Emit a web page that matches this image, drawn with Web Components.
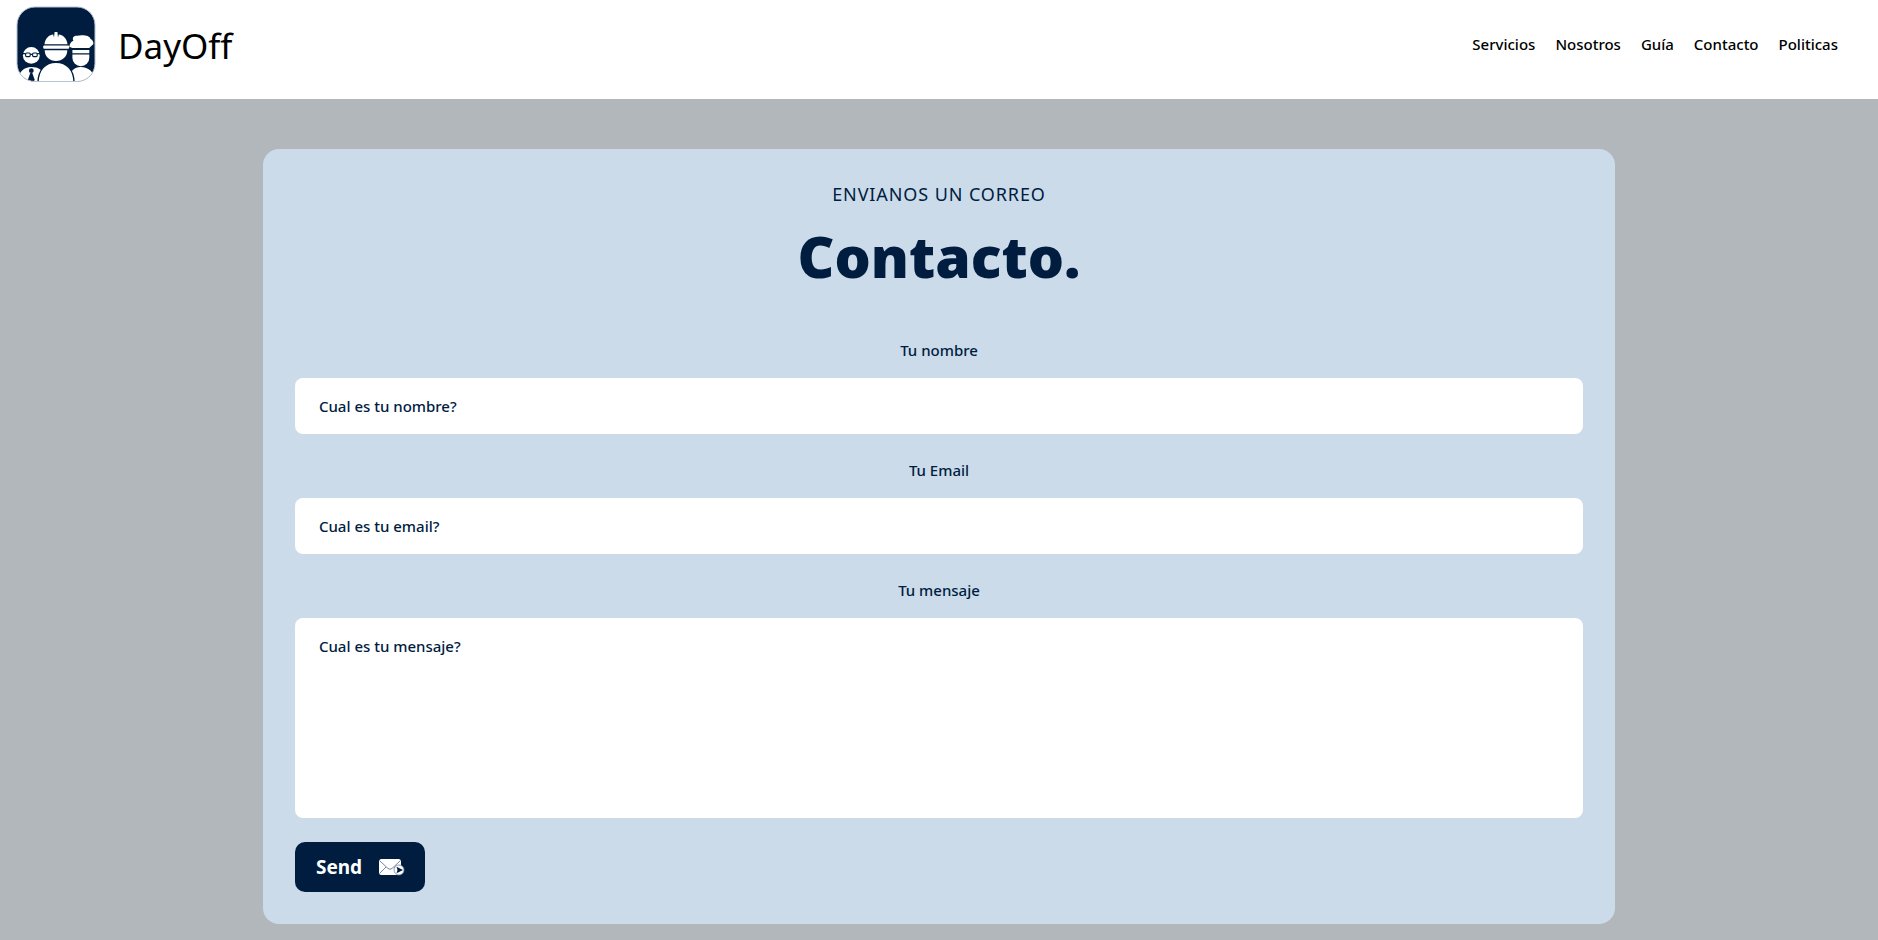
<!DOCTYPE html>
<html lang="es">
<head>
<meta charset="utf-8">
<meta name="viewport" content="width=device-width, initial-scale=1">
<title>DayOff - Contacto</title>
<style>
  html { height: 100%; }
  body {
    margin: 0;
    min-height: 100%;
    background: #b2b7bb;
    color: #001d3f;
    font: 15px/24px "Segoe UI", "Noto Sans", "Open Sans", sans-serif;
  }
</style>
</head>
<body>
<dayoff-app></dayoff-app>

<template id="tpl-app">
  <style>
    :host { display: block; }
    main { padding: 50px 0 16px; }
  </style>
  <dayoff-header>
    <nav-link href="#servicios">Servicios</nav-link>
    <nav-link href="#nosotros">Nosotros</nav-link>
    <nav-link href="#guia">Guía</nav-link>
    <nav-link href="#contacto">Contacto</nav-link>
    <nav-link href="#politicas">Politicas</nav-link>
  </dayoff-header>
  <main>
    <contact-card>
      <span slot="kicker">Envianos un correo</span>
      <span slot="title">Contacto.</span>
      <form-field label="Tu nombre" name="name" placeholder="Cual es tu nombre?"></form-field>
      <form-field label="Tu Email" name="email" type="email" placeholder="Cual es tu email?"></form-field>
      <form-field label="Tu mensaje" name="message" rows="7" placeholder="Cual es tu mensaje?"></form-field>
      <send-button>Send</send-button>
    </contact-card>
  </main>
</template>

<template id="tpl-header">
  <style>
    :host { display: block; background: #fff; color: #000; }
    header { display: flex; justify-content: space-between; align-items: flex-start; padding: 6px 40px 17px 16px; }
    .brand { display: flex; align-items: center; gap: 22px; color: inherit; text-decoration: none; font-size: 35px; line-height: 40px; }
    .brand span { padding-top: 4px; }
    nav { display: flex; gap: 20px; padding-top: 26px; }
  </style>
  <header>
    <a class="brand" href="#inicio"><dayoff-logo></dayoff-logo><span>DayOff</span></a>
    <nav><slot></slot></nav>
  </header>
</template>

<template id="tpl-link">
  <style>
    :host { display: block; }
    a { color: inherit; text-decoration: none; font-weight: 500; }
  </style>
  <a><slot></slot></a>
</template>

<template id="tpl-logo">
  <style>
    :host { display: block; }
    svg { display: block; width: 80px; height: 76px; }
  </style>
  <svg viewBox="0 0 80 76" aria-hidden="true">
    <defs><clipPath id="tile"><rect x="1" y="1" width="78" height="74.5" rx="18"/></clipPath></defs>
    <rect x="1" y="1" width="78" height="74.5" rx="18" fill="#001d3f"/>
    <g clip-path="url(#tile)" fill="#fff">
      <!-- office worker -->
      <circle cx="15.3" cy="49.4" r="8.4"/>
      <g fill="none" stroke="#001d3f" stroke-width="1.1">
        <rect x="9.6" y="47" width="4.6" height="3.6" rx="1"/>
        <rect x="16.6" y="47" width="4.6" height="3.6" rx="1"/>
        <path d="M7 47.6h2.6M14.2 48.4h2.4M21.2 47.6h2.6"/>
      </g>
      <path d="M2 76C2 66 8 61 15.3 61S27 64 27 69v7z"/>
      <circle cx="15.3" cy="64.7" r="2.4" fill="#001d3f"/>
      <path d="M14.3 67h2l2.300 6.500-.8 2.500h-5l-.8-2.500z" fill="#001d3f"/>
      <!-- cook -->
      <path d="M54 76C53 66 57 60.9 64.7 60.9S79 66 79 76z"/>
      <path d="M56.4 48.6h16.9v3.2a8.4 8.4 0 0 1-16.9 0z"/>
      <path d="M56.4 43.9h16.9v3.4H56.4z"/>
      <path d="M56.2 41.9 53.4 40.7C53.3 38 55.3 35.4 57.4 34.8 55.6 31 58.6 29.3 61.8 29.8 65 28.7 74 28.8 74.6 33.1 76.4 33.8 77.6 36 77.4 38L73.2 41.9z"/>
      <!-- builder -->
      <path d="M22 76C22.5 64 29 56.3 40 56.3S57.7 64 58 76z" stroke="#001d3f" stroke-width="1.4"/>
      <path d="M28.7 44.2h22.6c0 6.4-5 10.8-11.3 10.8S28.7 50.6 28.7 44.2z"/>
      <path d="M28.500 38.300C29 32.500 33.500 28.700 37.200 28.600L38 31.500 38.600 26h2.800L42 31.500 42.800 28.600C46.500 28.700 51 32.500 51.500 38.300z"/>
      <rect x="27.2" y="39.6" width="26" height="3.2" rx="1"/>
    </g>
    <rect x="1" y="1" width="78" height="74.5" rx="18" fill="none" stroke="#b9c3d2"/>
  </svg>
</template>

<template id="tpl-card">
  <style>
    :host { display: block; box-sizing: border-box; width: 72%; margin: 0 auto; padding: 32px; border-radius: 16px; background: #cbdbea; }
    p { margin: 0 0 16px; text-align: center; font-size: 18px; line-height: 26px; letter-spacing: 0.05em; text-transform: uppercase; }
    h1 { margin: 0; text-align: center; font-size: 57px; line-height: 67px; font-weight: 900; }
    form { display: flex; flex-direction: column; gap: 24px; margin-top: 48px; }
  </style>
  <p><slot name="kicker"></slot></p>
  <h1><slot name="title"></slot></h1>
  <form><slot></slot></form>
</template>

<template id="tpl-field">
  <style>
    :host { display: block; }
    label { display: block; margin-bottom: 16px; text-align: center; font-weight: 500; }
    input, textarea {
      display: block; box-sizing: border-box; width: 100%; margin: 0; padding: 16px 24px;
      border: 0; border-radius: 8px; outline: 0; background: #fff; color: inherit;
      font: inherit; font-weight: 500; resize: none;
    }
    input { height: 56px; }
    ::placeholder { color: #001d3f; opacity: 1; }
  </style>
  <label for="control"></label>
</template>

<template id="tpl-send">
  <style>
    :host { display: block; }
    button {
      display: flex; align-items: center; gap: 16px; height: 50px; padding: 0 19px 0 21px; border: 0;
      border-radius: 10px; background: #001d3f; color: #fff; font: inherit; font-size: 19px; font-weight: 700; cursor: pointer;
    }
    svg { display: block; width: 28px; height: 18px; }
  </style>
  <button type="submit"><slot></slot>
    <svg viewBox="0 0 28 18" aria-hidden="true">
      <rect x="1" y="1" width="22" height="16" rx="2.5" fill="#fff"/>
      <path d="M1.5 2.5 10 10.5q2 1.6 4 0l8.500-8M1.500 15.500 8 9M16 9l2 2" fill="none" stroke="#76859e" stroke-width="1"/>
      <circle cx="21" cy="12" r="5" fill="#fff" stroke="#76859e" stroke-width=".8"/>
      <path d="M18.500 8.800 25 12l-6.500 3.300 1-3.300z" fill="#001d3f"/>
    </svg>
  </button>
</template>

<script>
  class TemplateElement extends HTMLElement {
    constructor() {
      super();
      this.attachShadow({ mode: "open" }).append(
        document.getElementById(this.constructor.template).content.cloneNode(true)
      );
    }
  }

  class NavLink extends TemplateElement {
    static template = "tpl-link";
    connectedCallback() {
      this.shadowRoot.querySelector("a").href = this.getAttribute("href");
    }
  }

  class FormField extends TemplateElement {
    static template = "tpl-field";
    connectedCallback() {
      if (this.control) return;
      this.shadowRoot.querySelector("label").textContent = this.getAttribute("label");
      const rows = this.getAttribute("rows");
      this.control = document.createElement(rows ? "textarea" : "input");
      if (rows) this.control.rows = Number(rows);
      else this.control.type = this.getAttribute("type") || "text";
      this.control.id = "control";
      this.control.name = this.getAttribute("name");
      this.control.placeholder = this.getAttribute("placeholder");
      this.shadowRoot.append(this.control);
    }
  }

  customElements.define("dayoff-logo", class extends TemplateElement { static template = "tpl-logo"; });
  customElements.define("nav-link", NavLink);
  customElements.define("dayoff-header", class extends TemplateElement { static template = "tpl-header"; });
  customElements.define("form-field", FormField);
  customElements.define("send-button", class extends TemplateElement { static template = "tpl-send"; });
  customElements.define("contact-card", class extends TemplateElement { static template = "tpl-card"; });
  customElements.define("dayoff-app", class extends TemplateElement { static template = "tpl-app"; });
</script>
</body>
</html>
